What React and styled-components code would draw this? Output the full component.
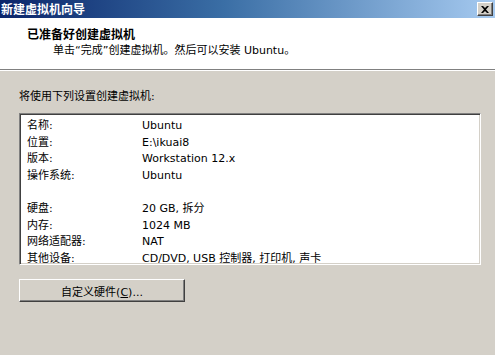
import React from "react";
import styled, { createGlobalStyle } from "styled-components";

const GlobalStyle = createGlobalStyle`
  html, body {
    margin: 0;
    padding: 0;
    background: #d4d0c8;
  }
  body {
    font-family: "DejaVu Sans", "Noto Sans CJK SC", sans-serif;
    font-size: 11px;
    color: #000;
  }
`;

const WINDOW = styled.div`
  width: 495px;
  height: 355px;
  overflow: hidden;
  background: #d4d0c8;
  display: flex;
  flex-direction: column;
`;

const TITLEBAR = styled.div`
  height: 18px;
  display: flex;
  align-items: center;
  justify-content: space-between;
  padding: 0 2px 0 1px;
  background: linear-gradient(to right, #0a246a 0%, #3a6ea5 45%, #a6caf0 100%);
`;

const TITLE = styled.span`
  color: #fff;
  font-family: "Noto Sans CJK SC", sans-serif;
  font-weight: 700;
  font-size: 12px;
  line-height: 18px;
`;

const CLOSE = styled.div`
  width: 16px;
  height: 14px;
  box-sizing: border-box;
  background: #d4d0c8;
  border: 1px solid;
  border-color: #fff #404040 #404040 #fff;
  box-shadow: inset -1px -1px 0 #808080;
  display: flex;
  align-items: center;
  justify-content: center;
`;

const HEADER = styled.div`
  height: 52px;
  background: #fff;
  padding: 9px 0 0 27px;
  box-sizing: border-box;
  border-bottom: 1px solid #808080;
  box-shadow: 0 1px 0 #fff;
`;

const HEAD_TITLE = styled.div`
  font-family: "Noto Sans CJK SC", sans-serif;
  font-weight: 700;
  font-size: 12px;
  line-height: 14px;
`;

const HEAD_SUB = styled.div`
  padding-left: 26px;
  margin-top: 2px;
  font-family: "DejaVu Sans", "Noto Sans CJK SC", sans-serif;
  font-size: 11px;
  line-height: 16px;
`;

const BODY = styled.div`
  padding: 19px 14px 0 19px;
  display: flex;
  flex-direction: column;
`;

const PROMPT = styled.div`
  font-family: "DejaVu Sans", "Noto Sans CJK SC", sans-serif;
  font-size: 11px;
  line-height: 16px;
`;

const LISTBOX = styled.div`
  margin-top: 8px;
  height: 152px;
  box-sizing: border-box;
  background: #fff;
  border: 1px solid;
  border-color: #808080 #fff #fff #808080;
  box-shadow: inset 1px 1px 0 #404040, inset -1px -1px 0 #d4d0c8;
  padding: 4px 0 0 7px;
  overflow: hidden;
`;

const ROW = styled.div`
  display: grid;
  grid-template-columns: 115px 1fr;
  height: ${(p) => (p.$blank ? "17px" : "16.5px")};
  line-height: 16px;
  white-space: nowrap;
`;

const BUTTON = styled.button`
  margin-top: 14px;
  width: 166px;
  height: 23px;
  background: #d4d0c8;
  border: 1px solid;
  border-color: #fff #404040 #404040 #fff;
  box-shadow: inset -1px -1px 0 #808080;
  font-family: "DejaVu Sans", "Noto Sans CJK SC", sans-serif;
  font-size: 11px;
  color: #000;
  padding: 0;
  cursor: default;
`;

const rows = [
  ["名称:", "Ubuntu"],
  ["位置:", "E:\\ikuai8"],
  ["版本:", "Workstation 12.x"],
  ["操作系统:", "Ubuntu"],
  null,
  ["硬盘:", "20 GB, 拆分"],
  ["内存:", "1024 MB"],
  ["网络适配器:", "NAT"],
  ["其他设备:", "CD/DVD, USB 控制器, 打印机, 声卡"],
];

export default function App() {
  return (
    <WINDOW>
      <GlobalStyle />
      <TITLEBAR>
        <TITLE>新建虚拟机向导</TITLE>
        <CLOSE>
          <svg width="8" height="7" viewBox="0 0 8 7">
            <path d="M0 0h2l2 2 2-2h2L5 3.5 8 7H6L4 5 2 7H0l3-3.5z" fill="#000" />
          </svg>
        </CLOSE>
      </TITLEBAR>
      <HEADER>
        <HEAD_TITLE>已准备好创建虚拟机</HEAD_TITLE>
        <HEAD_SUB>单击“完成”创建虚拟机。然后可以安装 Ubuntu。</HEAD_SUB>
      </HEADER>
      <BODY>
        <PROMPT>将使用下列设置创建虚拟机:</PROMPT>
        <LISTBOX>
          {rows.map((r, i) =>
            r ? (
              <ROW key={i}>
                <span>{r[0]}</span>
                <span>{r[1]}</span>
              </ROW>
            ) : (
              <ROW key={i} $blank />
            )
          )}
        </LISTBOX>
        <BUTTON>
          自定义硬件(<u>C</u>)...
        </BUTTON>
      </BODY>
    </WINDOW>
  );
}
